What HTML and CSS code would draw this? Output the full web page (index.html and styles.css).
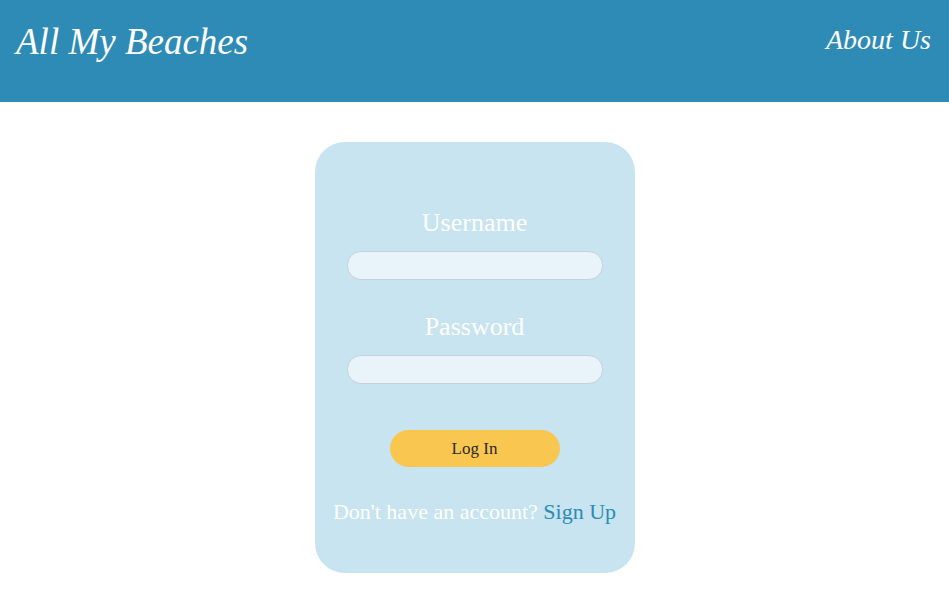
FILE: index.html
```html
<!DOCTYPE html>
<html lang="en">
<head>
<meta charset="utf-8">
<title>All My Beaches</title>
<link rel="stylesheet" href="styles.css">
</head>
<body>
<header class="topbar">
  <a class="brand" href="#">All My Beaches</a>
  <a class="nav-link" href="#">About Us</a>
</header>
<main class="page">
  <form class="login-card">
    <label class="field-label" for="username">Username</label>
    <input class="field-input" id="username" type="text">
    <label class="field-label field-label-second" for="password">Password</label>
    <input class="field-input" id="password" type="password">
    <button class="login-btn" type="button">Log In</button>
    <p class="signup-text">Don't have an account? <a class="signup-link" href="#">Sign Up</a></p>
  </form>
</main>
</body>
</html>
```

FILE: styles.css
```css
* { box-sizing: border-box; }

body {
  margin: 0;
  background: #ffffff;
  font-family: "Liberation Serif", "Times New Roman", serif;
}

.topbar {
  height: 102px;
  background: #2d8bb6;
  display: flex;
  justify-content: space-between;
  align-items: flex-start;
  padding: 20px 18px 0 16px;
}

.brand {
  color: #ffffff;
  font-style: italic;
  font-size: 37px;
  line-height: 44px;
  text-decoration: none;
}

.nav-link {
  color: #ffffff;
  font-style: italic;
  font-size: 28px;
  line-height: 32px;
  margin-top: 4px;
  text-decoration: none;
}

.page {
  display: flex;
  justify-content: center;
  padding-top: 40px;
}

.login-card {
  width: 320px;
  height: 431px;
  background: #c7e4f0;
  border-radius: 30px;
  display: flex;
  flex-direction: column;
  align-items: center;
  padding-top: 66px;
}

.field-label {
  color: #ffffff;
  font-size: 26px;
  line-height: 30px;
}

.field-label-second {
  margin-top: 32px;
}

.field-input {
  margin-top: 13px;
  width: 256px;
  height: 29px;
  border: 1px solid #c6d2da;
  border-radius: 14px;
  background: #e8f3fa;
  outline: none;
}

.login-btn {
  margin-top: 46px;
  width: 170px;
  height: 37px;
  border: none;
  border-radius: 19px;
  background: #f9c650;
  color: #2b2b2b;
  font-family: "Liberation Serif", "Times New Roman", serif;
  font-size: 17px;
  padding: 0;
}

.signup-text {
  margin: 32px 0 0;
  color: #ffffff;
  font-size: 22px;
  line-height: 26px;
  white-space: nowrap;
}

.signup-link {
  color: #2d8bb6;
  text-decoration: none;
}
```
